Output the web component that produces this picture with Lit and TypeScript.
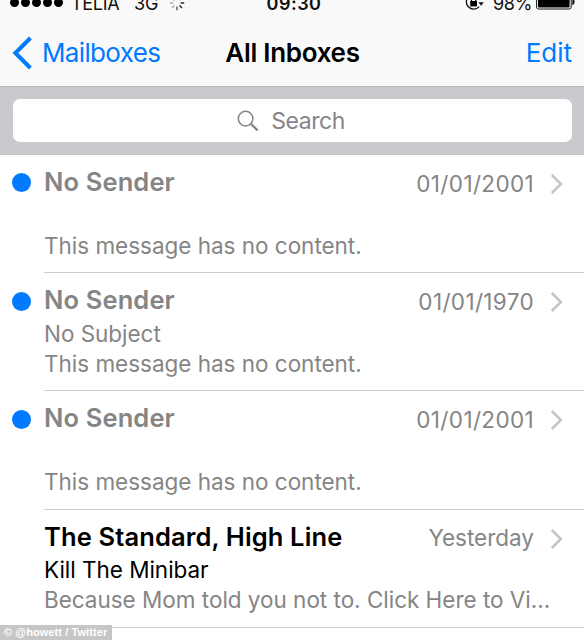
import { html, css, svg, LitElement } from "lit";
import { customElement, property } from "lit/decorators.js";
import { classMap } from "lit/directives/class-map.js";

interface Message {
  sender: string;
  subject: string;
  preview: string;
  date: string;
  unread: boolean;
}

const messages: Message[] = [
  { sender: "No Sender", subject: "", preview: "This message has no content.", date: "01/01/2001", unread: true },
  { sender: "No Sender", subject: "No Subject", preview: "This message has no content.", date: "01/01/1970", unread: true },
  { sender: "No Sender", subject: "", preview: "This message has no content.", date: "01/01/2001", unread: true },
  {
    sender: "The Standard, High Line",
    subject: "Kill The Minibar",
    preview: "Because Mom told you not to. Click Here to Vi...",
    date: "Yesterday",
    unread: false,
  },
];

// spokes of the activity spinner, darkest first going clockwise
const spokes = [0.95, 0.9, 0.7, 0.35, 0.35, 0.3, 0.25, 0.2];

@customElement("status-bar")
export class StatusBar extends LitElement {
  override render() {
    return html`
      <div class="left">
        <div class="signal"><i></i><i></i><i></i><i></i><i></i></div>
        <span class="carrier">TELIA</span>
        <span class="network">3G</span>
        <svg class="spinner" width="16" height="16" viewBox="-8 -8 16 16">
          ${spokes.map(
            (o, i) => svg`<path d="M0 -3.6V-7.2" stroke="#000" stroke-width="1.3" opacity=${o} transform="rotate(${90 + i * 45})" />`
          )}
        </svg>
      </div>
      <span class="time">09:30</span>
      <div class="right">
        <svg class="lock" width="20" height="20" viewBox="0 0 20 20">
          <path d="M14.2 14.6A7.3 7.3 0 1 1 15 6.2" fill="none" stroke="#111" stroke-width="1.3" />
          <path d="M13.4 10.2H18.8L16.1 13.8Z" fill="#111" />
          <rect x="5.2" y="9" width="6.8" height="5.4" fill="#000" />
          <path d="M6.5 9V7.4a2.1 2.1 0 0 1 4.2 0V9" fill="none" stroke="#000" stroke-width="1.2" />
        </svg>
        <span class="percent">98%</span>
        <svg class="battery" width="39" height="17" viewBox="0 0 39 17">
          <rect x="0.6" y="0.6" width="34.6" height="15.4" rx="2" fill="#fff" stroke="#111" stroke-width="1" />
          <rect x="2" y="2" width="31.6" height="12.6" rx="0.8" fill="#000" />
          <path d="M36.4 5.4q2.2 1 2.2 3.6t-2.2 3.6z" fill="#111" />
        </svg>
      </div>
    `;
  }

  static styles = css`
    :host {
      display: flex;
      align-items: center;
      height: 24px;
      margin-top: -8px;
      padding: 0 9px 0 10px;
      font-size: 18px;
      line-height: 24px;
      color: #111;
    }

    .left,
    .right {
      display: flex;
      flex: 1 1 0;
      align-items: center;
    }

    .right {
      justify-content: flex-end;
    }

    .signal {
      display: flex;
      gap: 2px;
      margin-right: 8px;
      padding-bottom: 3px;
    }

    .signal i {
      width: 9px;
      height: 9px;
      border-radius: 50%;
      background: #000;
    }

    .carrier {
      width: 63px;
      letter-spacing: -0.3px;
    }

    .network {
      width: 35px;
    }

    .spinner {
      margin-bottom: 3px;
    }

    .time {
      padding-left: 3px;
      font-weight: 600;
      letter-spacing: 0.5px;
    }

    .lock {
      margin-right: 8px;
      margin-bottom: 4px;
    }

    .percent {
      margin-right: 4px;
      letter-spacing: -0.3px;
    }

    .battery {
      margin-bottom: 5px;
    }
  `;
}

@customElement("message-row")
export class MessageRow extends LitElement {
  @property({ attribute: false }) message!: Message;

  override render() {
    const m = this.message;
    return html`
      <div class="marker">${m.unread ? html`<div class="dot"></div>` : ""}</div>
      <div class=${classMap({ body: true, muted: m.unread })}>
        <div class="top">
          <span class="sender">${m.sender}</span>
          <span class=${classMap({ date: true, word: !m.unread })}>${m.date}</span>
          <svg class="chevron" width="14" height="22" viewBox="0 0 14 22">
            <path d="M1.8 2L10.9 11L1.8 20" fill="none" stroke="#c4c4c7" stroke-width="2.5" />
          </svg>
        </div>
        <div class="subject">${m.subject}</div>
        <div class="preview">${m.preview}</div>
      </div>
    `;
  }

  static styles = css`
    :host {
      display: flex;
      height: 118.2px;
      box-sizing: border-box;
    }

    .marker {
      width: 32px;
      margin-right: 12px;
      padding: 18.4px 0 0 12px;
      box-sizing: border-box;
    }

    .dot {
      width: 19px;
      height: 19px;
      border-radius: 50%;
      background: #007aff;
    }

    .body {
      flex: 1;
      min-width: 0;
      padding-top: 12px;
      box-sizing: border-box;
      border-bottom: 1px solid #cecece;
      white-space: nowrap;
      color: #000;
    }

    .top {
      display: flex;
      align-items: center;
      height: 30px;
      margin-bottom: 3.6px;
    }

    .sender {
      flex: 1;
      font-size: 25.5px;
      font-weight: 600;
      line-height: 30px;
      letter-spacing: 0.13px;
    }

    .date {
      padding-top: 3px;
      font-size: 22.5px;
      line-height: 30px;
      letter-spacing: 0.35px;
      color: #858585;
    }

    .word {
      letter-spacing: 0;
    }

    .chevron {
      margin: 4px 20px 0 16px;
    }

    .subject,
    .preview {
      height: 30px;
      font-size: 22.5px;
      line-height: 30px;
    }

    .subject {
      letter-spacing: -0.03px;
    }

    .preview {
      letter-spacing: -0.02px;
      color: #858585;
    }

    .muted {
      color: #858585;
    }
  `;
}

@customElement("app-root")
export class AppRoot extends LitElement {
  override render() {
    return html`
      <status-bar></status-bar>
      <header>
        <div class="back">
          <svg width="20" height="34" viewBox="0 0 20 34">
            <path d="M18.4 2L3.4 17L18.4 32" fill="none" stroke="#007aff" stroke-width="4" />
          </svg>
          <span>Mailboxes</span>
        </div>
        <h1>All Inboxes</h1>
        <span class="edit">Edit</span>
      </header>
      <div class="search-bar">
        <div class="field">
          <svg width="22" height="22" viewBox="0 0 22 22">
            <circle cx="8.6" cy="8.6" r="7.3" fill="none" stroke="#85858a" stroke-width="1.5" />
            <path d="M13.8 13.8L20.6 20.4" stroke="#85858a" stroke-width="2.2" />
          </svg>
          <span>Search</span>
        </div>
      </div>
      <main>${messages.map((m) => html`<message-row .message=${m}></message-row>`)}</main>
      <div class="credit">© @howett / Twitter</div>
    `;
  }

  static styles = css`
    :host {
      display: flex;
      flex-direction: column;
      position: relative;
      width: 584px;
      height: 640px;
      overflow: hidden;
      background: #fff;
      font-family: Inter, "Liberation Sans", sans-serif;
    }

    status-bar,
    header {
      background: #f9f9f9;
    }

    header {
      display: flex;
      align-items: center;
      height: 71px;
      padding: 3px 12px 0;
      box-sizing: border-box;
      border-bottom: 1px solid #b9b9bd;
      font-size: 26px;
      line-height: 32px;
      color: #007aff;
    }

    .back {
      display: flex;
      flex: 1 1 0;
      align-items: center;
      gap: 10px;
      letter-spacing: -0.65px;
    }

    h1 {
      margin: 0;
      padding-left: 1px;
      font-size: 26px;
      font-weight: 600;
      letter-spacing: -0.3px;
      color: #000;
    }

    .edit {
      flex: 1 1 0;
      text-align: right;
    }

    .search-bar {
      height: 68px;
      padding: 12px 12px 12px 13px;
      box-sizing: border-box;
      border-bottom: 1px solid #c2c2c6;
      background: #c9c9ce;
    }

    .field {
      display: flex;
      align-items: center;
      justify-content: center;
      gap: 12px;
      height: 43px;
      padding-right: 3px;
      border-radius: 7px;
      background: #fff;
      font-size: 23px;
      letter-spacing: -0.45px;
      color: #85858a;
    }

    .credit {
      position: absolute;
      left: 0;
      bottom: 0;
      width: 112px;
      height: 15px;
      padding-left: 4px;
      box-sizing: border-box;
      background: #c6c6c6;
      font: bold 11px/15px "Liberation Sans", sans-serif;
      letter-spacing: 0.08px;
      white-space: nowrap;
      color: #fff;
    }
  `;
}
